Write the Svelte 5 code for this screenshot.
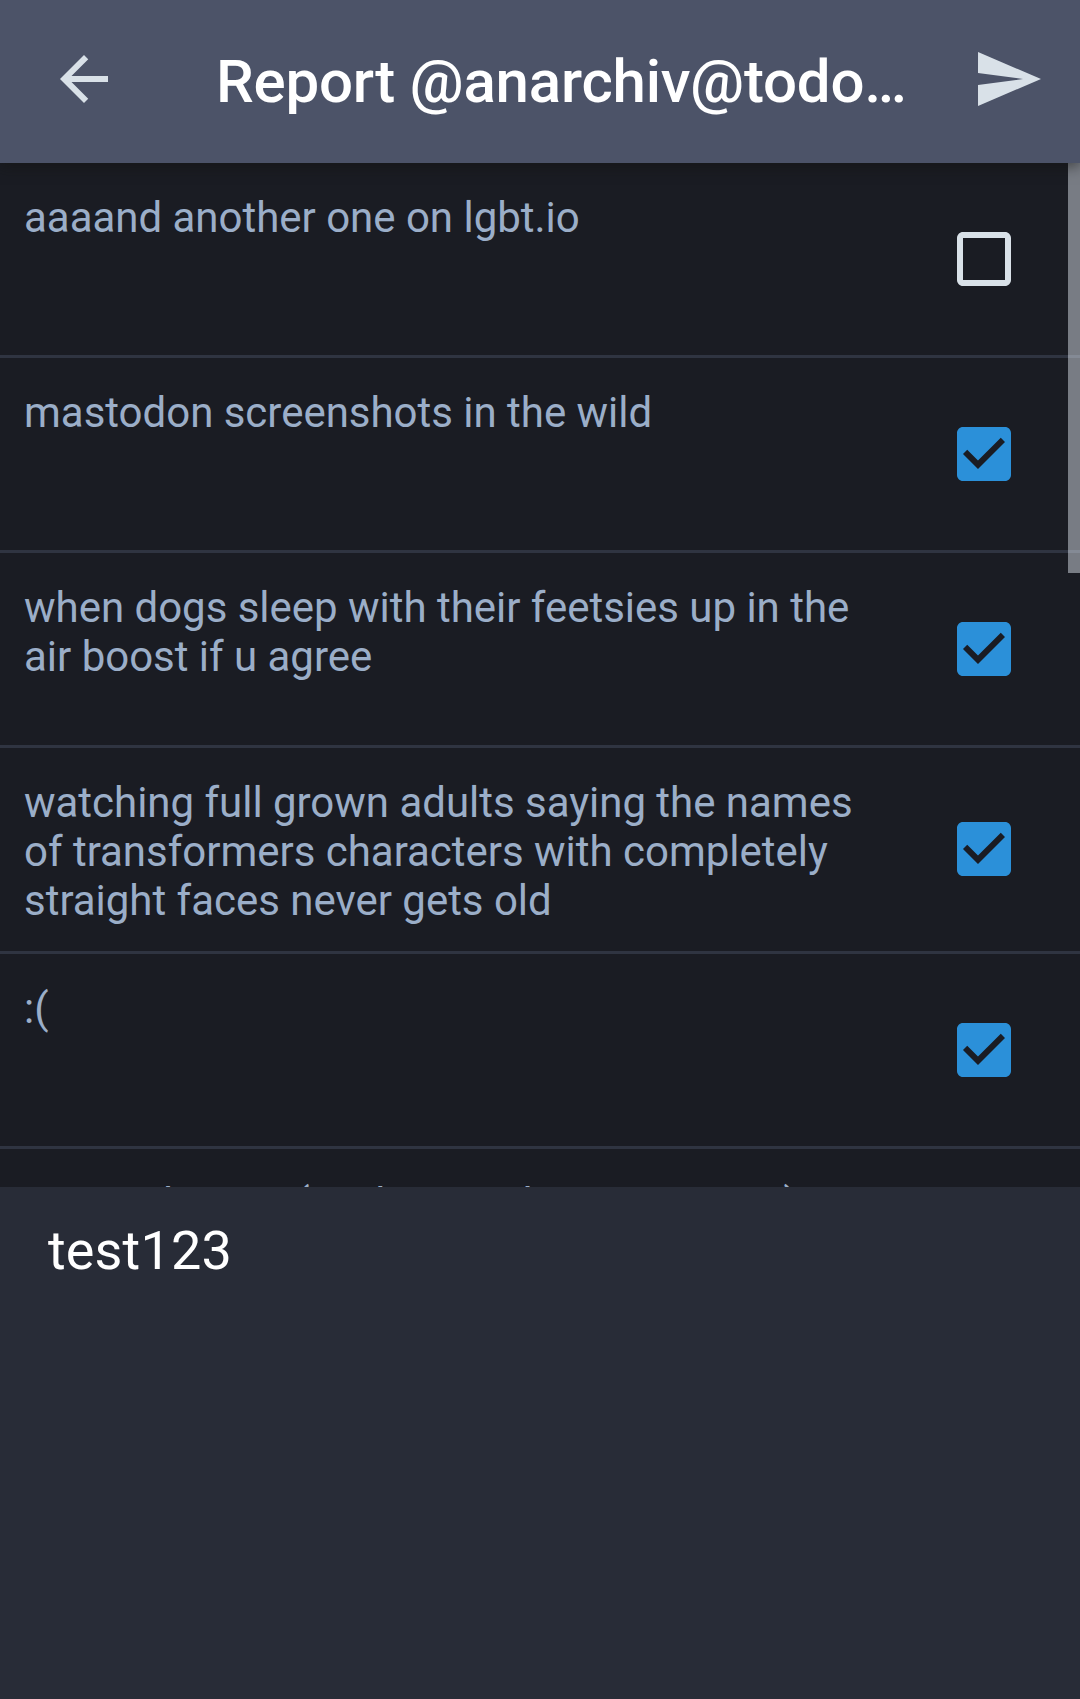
<script>
  let statuses = $state([
    { text: 'aaaand another one on lgbt.io', checked: false },
    { text: 'mastodon screenshots in the wild', checked: true },
    { text: 'when dogs sleep with their feetsies up in the air boost if u agree', checked: true },
    { text: 'watching full grown adults saying the names of transformers characters with completely straight faces never gets old', checked: true },
    { text: ':(', checked: true },
    { text: 'set on the city (yet here with your system)', checked: false }
  ]);
  let comment = $state('test123');
</script>

<div class="screen">
  <header class="toolbar">
    <button class="icon" aria-label="Back">
      <svg viewBox="0 0 24 24"><path d="M20 11H7.83l5.59-5.59L12 4l-8 8 8 8 1.41-1.41L7.83 13H20v-2z" /></svg>
    </button>
    <h1>Report @anarchiv@todo…</h1>
    <button class="icon" aria-label="Send">
      <svg viewBox="0 0 24 24"><path d="M2.01 21L23 12 2.01 3 2 10l15 2-15 2z" /></svg>
    </button>
  </header>

  <main class="list">
    {#each statuses as status}
      <div class="row">
        <p>{status.text}</p>
        <button
          class="check"
          role="checkbox"
          aria-checked={status.checked}
          aria-label={status.text}
          onclick={() => (status.checked = !status.checked)}
        >
          <svg viewBox="3 3 18 18">
            {#if status.checked}
              <path class="on" d="M19 3H5c-1.11 0-2 .9-2 2v14c0 1.1.89 2 2 2h14c1.11 0 2-.9 2-2V5c0-1.1-.89-2-2-2zm-9 14l-5-5 1.41-1.41L10 14.17l7.59-7.59L19 8l-9 9z" />
            {:else}
              <path class="off" d="M19 5v14H5V5h14m0-2H5c-1.1 0-2 .9-2 2v14c0 1.1.9 2 2 2h14c1.1 0 2-.9 2-2V5c0-1.1-.9-2-2-2z" />
            {/if}
          </svg>
        </button>
      </div>
    {/each}
    <div class="scrollbar"></div>
  </main>

  <textarea bind:value={comment} aria-label="Additional comments" spellcheck="false"></textarea>
</div>

<style>
  :global(body) {
    background: #282c37;
  }
  .screen {
    display: flex;
    flex-direction: column;
    width: 1080px;
    height: 1699px;
    overflow: hidden;
    background: #1a1c23;
    font-family: Roboto, sans-serif;
  }
  button {
    padding: 0;
    border: 0;
    background: none;
  }
  svg {
    display: block;
    width: 100%;
    height: 100%;
  }
  .toolbar {
    display: flex;
    align-items: center;
    flex: none;
    box-sizing: border-box;
    height: 163px;
    padding: 0 36px 5px 48px;
    background: #4c5368;
    box-shadow: 0 4px 12px rgba(20, 20, 16, 0.5);
    position: relative;
    z-index: 1;
  }
  .icon {
    flex: none;
    width: 72px;
    height: 72px;
  }
  .icon path {
    fill: #d9e1e8;
  }
  h1 {
    flex: 1;
    margin: 0 0 0 96px;
    padding-top: 5px;
    font-size: 60px;
    font-weight: 500;
    line-height: 70px;
    letter-spacing: -0.2px;
    color: #fff;
    white-space: nowrap;
  }
  .list {
    position: relative;
    flex: none;
    height: 1024px;
    overflow: hidden;
  }
  .row {
    display: flex;
    align-items: center;
    box-sizing: border-box;
    min-height: 195px;
    padding: 0 69px 0 24px;
    border-bottom: 3px solid #2f3441;
  }
  p {
    align-self: flex-start;
    width: 850px;
    margin: 0;
    padding: 30px 0 26px;
    font-size: 42px;
    line-height: 49px;
    letter-spacing: -0.02px;
    color: #9baec8;
  }
  .check {
    flex: none;
    width: 54px;
    height: 54px;
    margin: 0 0 0.2px auto;
  }
  .on {
    fill: #2b90d9;
  }
  .off {
    fill: #d9e1e8;
  }
  .scrollbar {
    position: absolute;
    top: 0;
    right: 0;
    width: 12px;
    height: 410px;
    background: rgba(240, 246, 254, 0.445);
  }
  textarea {
    flex: 1;
    box-sizing: border-box;
    width: 100%;
    padding: 32px 48px;
    border: 0;
    outline: 0;
    resize: none;
    background: #282c37;
    color: #fff;
    font: 400 54px/63px Roboto, sans-serif;
    letter-spacing: 0.15px;
  }
</style>
